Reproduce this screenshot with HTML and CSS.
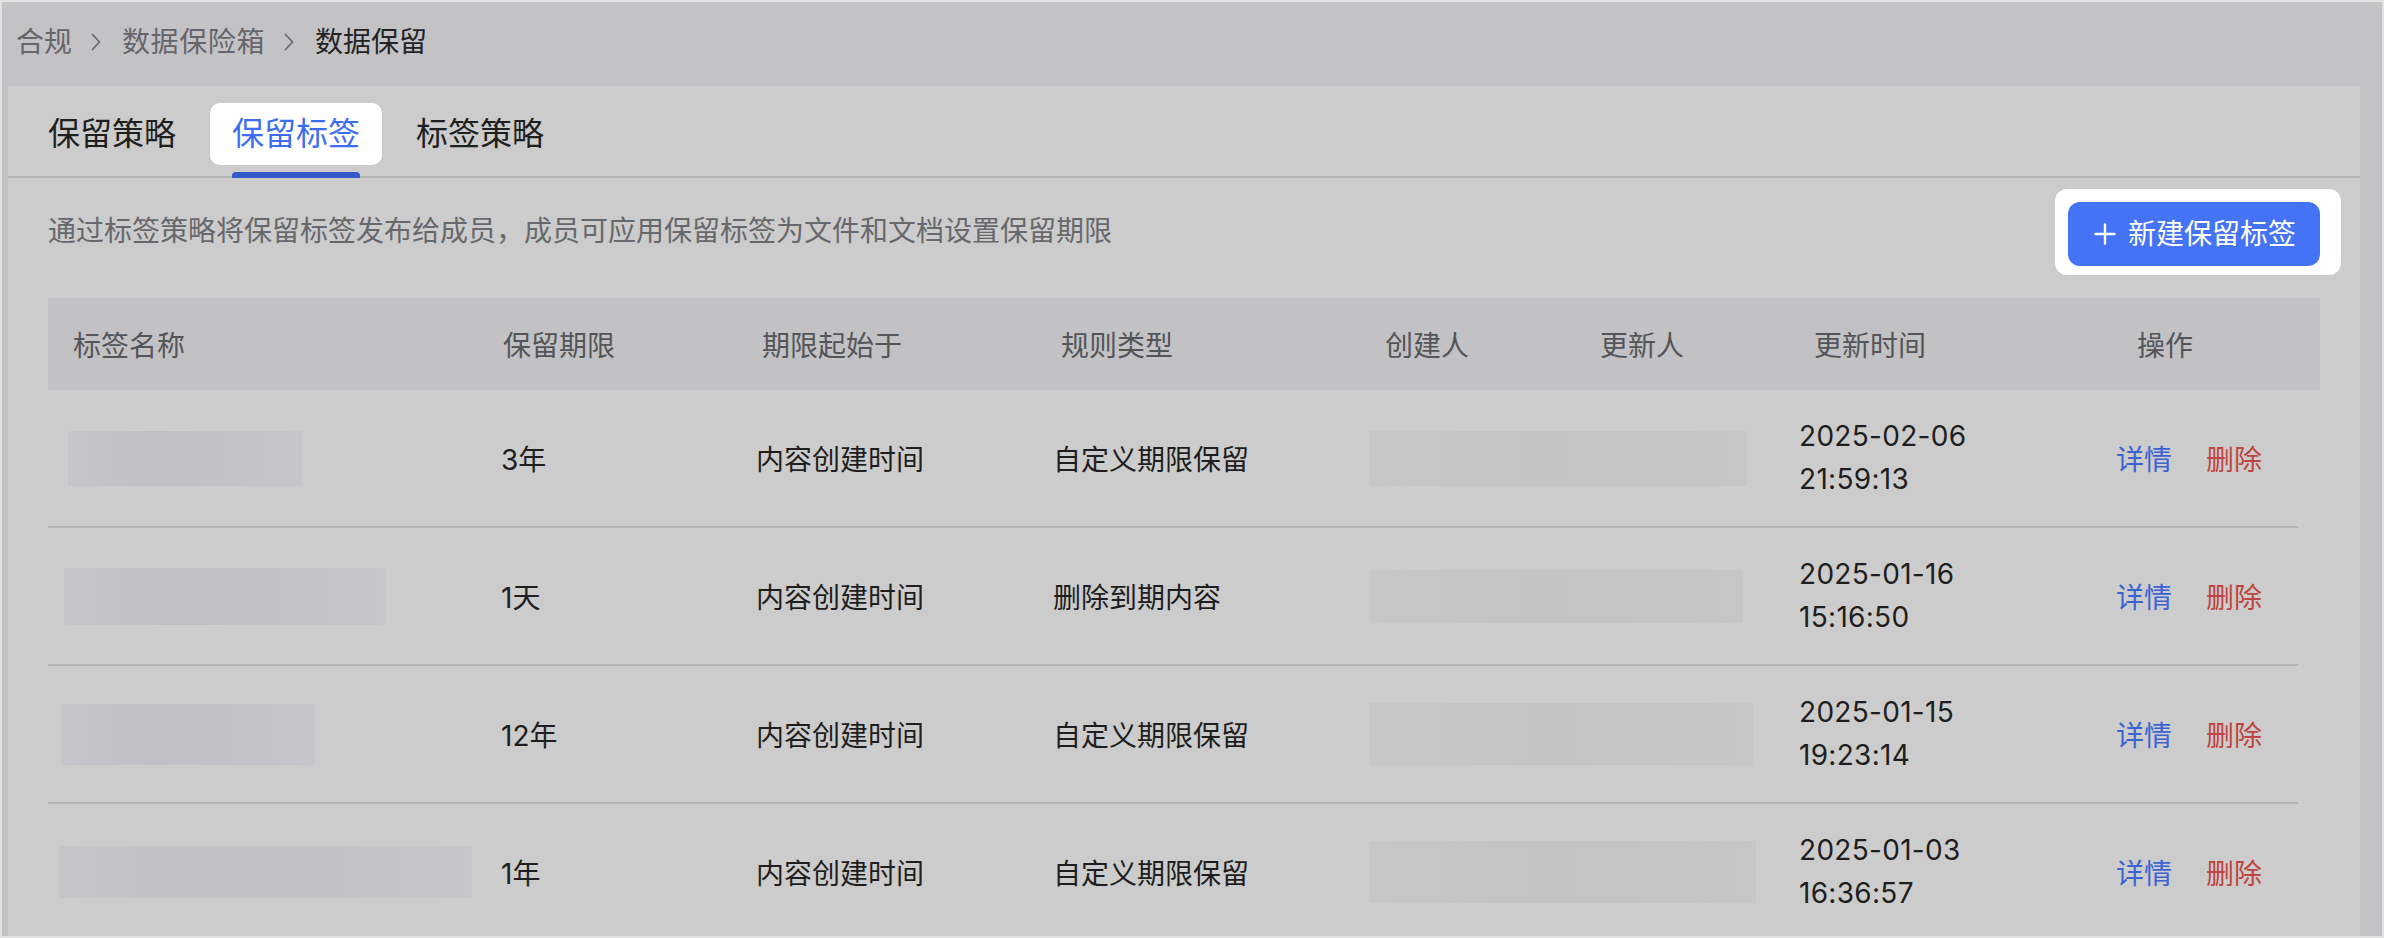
FILE: index.html
```html
<!DOCTYPE html>
<html lang="zh-CN">
<head>
<meta charset="utf-8">
<title>数据保留</title>
<link rel="stylesheet" href="styles.css">
</head>
<body>
<div class="frame">
  <nav class="crumbs">
    <span class="crumb">合规</span>
    <svg class="chev" viewBox="0 0 12 20" width="12" height="20"><path d="M2.5 2.5 L9.5 10 L2.5 17.5" fill="none" stroke="currentColor" stroke-width="1.8" stroke-linecap="round" stroke-linejoin="round"/></svg>
    <span class="crumb crumb--wide">数据保险箱</span>
    <svg class="chev" viewBox="0 0 12 20" width="12" height="20"><path d="M2.5 2.5 L9.5 10 L2.5 17.5" fill="none" stroke="currentColor" stroke-width="1.8" stroke-linecap="round" stroke-linejoin="round"/></svg>
    <span class="crumb crumb--current">数据保留</span>
  </nav>

  <main class="panel">
    <div class="tabs">
      <div class="tab"><span class="tab__label">保留策略</span></div>
      <div class="tab tab--active"><span class="tab__label">保留标签</span><span class="tab__bar"></span></div>
      <div class="tab"><span class="tab__label">标签策略</span></div>
    </div>

    <div class="toolbar">
      <p class="desc">通过标签策略将保留标签发布给成员，成员可应用保留标签为文件和文档设置保留期限</p>
      <div class="spot">
        <button class="btn-primary">
          <svg class="plus" viewBox="0 0 22 22" width="22" height="22"><path d="M11 1.5 V20.5 M1.5 11 H20.5" stroke="currentColor" stroke-width="2.4" stroke-linecap="round"/></svg>
          <span>新建保留标签</span>
        </button>
      </div>
    </div>

    <div class="table">
      <div class="thead">
        <div class="th">标签名称</div>
        <div class="th">保留期限</div>
        <div class="th">期限起始于</div>
        <div class="th">规则类型</div>
        <div class="th">创建人</div>
        <div class="th">更新人</div>
        <div class="th">更新时间</div>
        <div class="th">操作</div>
      </div>

      <div class="tr">
        <div class="td"><span class="blur blur--name" style="width:234px;height:55px;margin-left:20px"></span></div>
        <div class="td">3年</div>
        <div class="td">内容创建时间</div>
        <div class="td">自定义期限保留</div>
        <div class="td"><span class="blur blur--user" style="width:378px;height:55px"></span></div>
        <div class="td td--date"><span>2025-02-06</span><span>21:59:13</span></div>
        <div class="td td--ops"><a class="link">详情</a><a class="link link--danger">删除</a></div>
      </div>

      <div class="tr">
        <div class="td"><span class="blur blur--name" style="width:322px;height:57px;margin-left:16px"></span></div>
        <div class="td">1天</div>
        <div class="td">内容创建时间</div>
        <div class="td">删除到期内容</div>
        <div class="td"><span class="blur blur--user" style="width:373px;height:53px;margin-left:1px"></span></div>
        <div class="td td--date"><span>2025-01-16</span><span>15:16:50</span></div>
        <div class="td td--ops"><a class="link">详情</a><a class="link link--danger">删除</a></div>
      </div>

      <div class="tr">
        <div class="td"><span class="blur blur--name" style="width:254px;height:61px;margin-left:13px"></span></div>
        <div class="td">12年</div>
        <div class="td">内容创建时间</div>
        <div class="td">自定义期限保留</div>
        <div class="td"><span class="blur blur--user" style="width:384px;height:62px"></span></div>
        <div class="td td--date"><span>2025-01-15</span><span>19:23:14</span></div>
        <div class="td td--ops"><a class="link">详情</a><a class="link link--danger">删除</a></div>
      </div>

      <div class="tr">
        <div class="td"><span class="blur blur--name" style="width:413px;height:52px;margin-left:11px"></span></div>
        <div class="td">1年</div>
        <div class="td">内容创建时间</div>
        <div class="td">自定义期限保留</div>
        <div class="td"><span class="blur blur--user" style="width:387px;height:62px"></span></div>
        <div class="td td--date"><span>2025-01-03</span><span>16:36:57</span></div>
        <div class="td td--ops"><a class="link">详情</a><a class="link link--danger">删除</a></div>
      </div>
    </div>
  </main>
</div>
</body>
</html>
```

FILE: styles.css
```css
* { box-sizing: border-box; }

html, body {
  margin: 0;
  padding: 0;
  width: 2384px;
  height: 938px;
  overflow: hidden;
}

body {
  font-family: Inter, "Noto Sans CJK SC", sans-serif;
  color: #1e1e20;
}

.frame {
  width: 2384px;
  height: 938px;
  border: 2px solid #e2e2e2;
  background: #c3c3c5;
  padding: 0 22px 0 6px;
  display: flex;
  flex-direction: column;
  overflow: hidden;
}

/* breadcrumb */
.crumbs {
  height: 84px;
  flex: none;
  display: flex;
  align-items: center;
  padding: 0 0 4px 8px;
  font-size: 28px;
  color: #66666a;
}
.crumb { line-height: 1; }
.crumb--wide { letter-spacing: 0.6px; }
.crumb--current { color: #232325; }
.chev {
  margin: 0 20px 0 18px;
  color: #6a6a6e;
  flex: none;
}

/* main panel */
.panel {
  flex: 1;
  background: #cccccc;
  display: flex;
  flex-direction: column;
  min-height: 0;
}

.tabs {
  display: flex;
  gap: 12px;
  padding-left: 18px;
  height: 92px;
  flex: none;
  border-bottom: 2px solid #b6b6b6;
}
.tab {
  position: relative;
  padding-top: 17px;
}
.tab__label {
  display: block;
  height: 62px;
  line-height: 62px;
  padding: 0 22px;
  font-size: 32px;
  color: #1f1f20;
  border-radius: 10px;
}
.tab--active .tab__label {
  background: #ffffff;
  color: #3d6ef2;
}
.tab__bar {
  position: absolute;
  left: 22px;
  right: 22px;
  bottom: -2px;
  height: 6px;
  border-radius: 4px 4px 0 0;
  background: #3459c9;
}

/* toolbar */
.toolbar {
  flex: none;
  display: flex;
  align-items: center;
  justify-content: space-between;
  padding: 11px 40px 23px;
}
.desc {
  margin: 0;
  font-size: 28px;
  color: #67686b;
  line-height: 1.2;
}
.spot {
  background: #ffffff;
  border-radius: 12px;
  padding: 13px 21px 9px 13px;
  margin-right: -21px;
}
.btn-primary {
  display: flex;
  align-items: center;
  gap: 12px;
  height: 64px;
  padding: 0 24px 0 26px;
  border: none;
  border-radius: 12px;
  background: #4573f6;
  color: #ffffff;
  font-family: inherit;
  font-size: 28px;
  line-height: 1;
}
.plus { flex: none; }

/* table */
.table {
  margin: 0 40px;
}
.thead {
  display: grid;
  grid-template-columns: 430px 259px 299px 324px 215px 214px 323px 1fr;
  height: 92px;
  align-items: center;
  padding-left: 25px;
  background: #c2c2c4;
  font-size: 28px;
  color: #545558;
}
.tr {
  display: grid;
  grid-template-columns: 453px 255px 297px 316px 430px 317px 1fr;
  height: 138px;
  align-items: center;
  font-size: 28px;
  color: #1e1e20;
  background-image: linear-gradient(#b4b4b4, #b4b4b4);
  background-repeat: no-repeat;
  background-size: calc(100% - 22px) 2px;
  background-position: left bottom;
  padding-bottom: 2px;
}
.td {
  display: flex;
  align-items: center;
  white-space: nowrap;
}
.td--date {
  flex-direction: column;
  align-items: flex-start;
  line-height: 43px;
  letter-spacing: 0.3px;
}
.td--ops {
  gap: 34px;
}
.link {
  color: #3c63d2;
  cursor: pointer;
}
.link--danger { color: #c0443f; }

.blur {
  display: block;
  flex: none;
}
.blur--name {
  background: linear-gradient(90deg, #c5c6c9 0%, #bfc0c4 35%, #c1c2c6 60%, #c5c6c9 100%);
}
.blur--user {
  background: linear-gradient(90deg, #c7c7c7 0%, #c4c4c4 45%, #c6c6c6 100%);
}
```
